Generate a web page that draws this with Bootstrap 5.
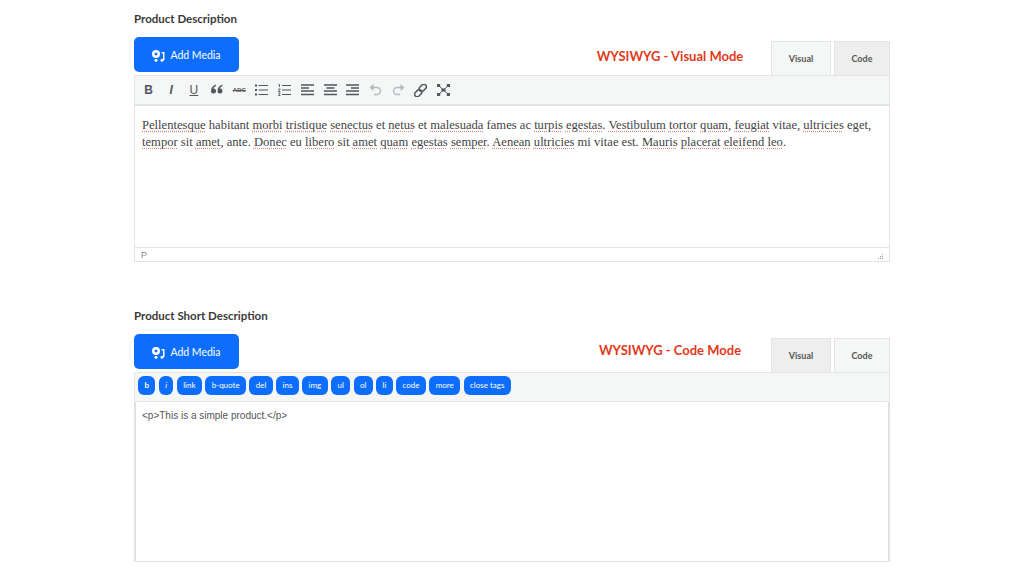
<!DOCTYPE html>
<html lang="en">
<head>
  <meta charset="UTF-8">
  <title>Product editor</title>
  <meta name="viewport" content="width=device-width, initial-scale=1">
  <link href="https://cdn.jsdelivr.net/npm/bootstrap@5.3.0/dist/css/bootstrap.min.css" rel="stylesheet">
  <style>
    body { font-family: "Lato", sans-serif; background: #fff; color: #333; overflow: hidden; }
    .page-wrap { width: 756px; margin-left: 134px; padding-top: 11px; }
    .field-label { font-size: 11.5px; font-weight: 700; line-height: 15px; color: #3a3a3a; margin-bottom: 11px; }
    .media-btn { width: 105px; height: 35px; font-size: 10.5px; border-radius: 5px; background: #0d6efd; border: 0; padding: 2px 0 0; gap: 5px; font-family: "Lato", sans-serif; }
    .mode-note { width: 202px; text-align: center; font-size: 13px; font-weight: 700; color: #e2391b; line-height: 17px; }
    .note-code { padding-bottom: 6px; }
    .head-row { height: 35px; }
    .mode-tab { width: 60px; height: 34px; border: 1px solid #e2e4e7; border-bottom: 0; font-size: 9px; font-weight: 700; color: #555; font-family: "Lato", sans-serif; margin-top: 4px; }
    .mode-tab + .mode-tab { margin-left: 3px; width: 56px; }
    .tab-on { background: #f5f6f6; }
    .tab-off { background: #eeeeee; }
    .edit-box { border: 1px solid #e2e4e7; margin-top: 3px; }
    .tool-row { height: 30px; background: #f5f6f6; border-bottom: 2px solid #e2e4e7; padding-left: 5px; }
    .tool-icon { width: 17px; height: 16px; color: #50575e; font-size: 12px; font-weight: 700; line-height: 16px; text-align: center; font-family: "Liberation Sans", sans-serif; }
    .tool-icon + .tool-icon { margin-left: 5.7px; }
    .tool-icon svg { display: block; margin: 2px auto 0; }
    .under-u { font-weight: 400; text-decoration: underline; }
    .tiny-abc { font-size: 6px; text-decoration: line-through; }
    .visual-body { height: 141px; padding: 11px 7px; font-family: "Liberation Serif", serif; font-size: 12.6px; line-height: 17px; color: #444; }
    .sp { text-decoration: underline dotted #e08a85; text-underline-offset: 2px; }
    .status-row { height: 14px; border-top: 1px solid #e2e4e7; font-size: 9px; line-height: 14px; color: #888; padding: 0 6px; font-family: "Liberation Sans", sans-serif; }
    .second-block { margin-top: 46px; }
    .quick-row { height: 28px; background: #f5f6f6; padding: 3px 0 0 3px; gap: 3.3px; }
    .quick-tag { height: 19px; font-size: 8px; line-height: 19px; color: #fff; background: #0d6efd; border-radius: 6px; padding: 0 6.45px; font-family: "Lato", sans-serif; }
    .code-box { height: 161px; border: 1px solid #dcdee0; border-top-color: #e2e4e7; border-radius: 2px; padding: 7px 6px; font-family: "Liberation Sans", sans-serif; font-size: 10px; line-height: 14px; color: #555; }
    .code-outer { border: 1px solid #e2e4e7; border-bottom: 0; margin-top: 3px; }
  </style>
</head>
<body>
  <div class="page-wrap">
    <div class="field-label">Product Description</div>
    <div class="d-flex align-items-start head-row">
      <button class="btn btn-primary media-btn d-flex align-items-center justify-content-center">
        <svg width="13" height="12" viewBox="0 0 13 12" fill="#fff"><path fill-rule="evenodd" d="M4 0a4 4 0 0 1 4 4 4 4 0 0 1-4 4 4 4 0 0 1-4-4 4 4 0 0 1 4-4zM2.700 2.700v2.600h2.600V2.700z"/><circle cx="4" cy="10.300" r="1.500"/><circle cx="10" cy="10.300" r="1.500"/><path d="M9.500 2H12.500V10H11V3.500H9.500z"/></svg>
        <span>Add Media</span>
      </button>
      <div class="ms-auto d-flex">
        <div class="mode-note align-self-center">WYSIWYG - Visual Mode</div>
        <div class="mode-tab tab-on d-flex align-items-center justify-content-center">Visual</div>
        <div class="mode-tab tab-off d-flex align-items-center justify-content-center">Code</div>
      </div>
    </div>
    <div class="edit-box">
      <div class="tool-row d-flex align-items-center">
        <div class="tool-icon">B</div>
        <div class="tool-icon fst-italic">I</div>
        <div class="tool-icon under-u">U</div>
        <div class="tool-icon"><svg width="12" height="11" viewBox="0 0 12 11" fill="#50575e"><path d="M5 0.500C2 1.500 0 3.500 0 7a2.500 2.500 0 1 0 2.500-2.500c0-.8.900-1.800 2.500-2.500zM11.500 0.500C8.500 1.500 6.500 3.500 6.500 7A2.500 2.500 0 1 0 9 4.500c0-.8.900-1.800 2.500-2.500z"/></svg></div>
        <div class="tool-icon tiny-abc">ABC</div>
        <div class="tool-icon"><svg width="13" height="12" viewBox="0 0 13 12" fill="none" stroke="#50575e"><path d="M3.500 1.500H13M3.500 6H13M3.500 10.500H13"/><path stroke-width="2" d="M0 1.500h2M0 6h2M0 10.500h2"/></svg></div>
        <div class="tool-icon"><svg width="13" height="12" viewBox="0 0 13 12" fill="none" stroke="#50575e"><path d="M4 1.500H13M4 6H13M4 10.500H13"/><path stroke-width="0.900" d="M0.500 0.700l1-.400V3M0.300 5h2l-2 2.500h2M0.300 9h2L1 10.300l1.300 1.200H0.300"/></svg></div>
        <div class="tool-icon"><svg width="13" height="12" viewBox="0 0 13 12" fill="none" stroke="#50575e" stroke-width="1.300"><path d="M0 1h13M0 4h8M0 7h13M0 10.500h13"/></svg></div>
        <div class="tool-icon"><svg width="13" height="12" viewBox="0 0 13 12" fill="none" stroke="#50575e" stroke-width="1.300"><path d="M0 1h13M2.500 4h8M0 7h13M0 10.500h13"/></svg></div>
        <div class="tool-icon"><svg width="13" height="12" viewBox="0 0 13 12" fill="none" stroke="#50575e" stroke-width="1.300"><path d="M0 1h13M5 4h8M0 7h13M0 10.500h13"/></svg></div>
        <div class="tool-icon"><svg width="13" height="12" viewBox="0 0 13 12" fill="none" stroke="#b4b9be" stroke-width="1.400"><path d="M2 3.500h6a3.500 3.500 0 0 1 0 7H5"/><path fill="#b4b9be" stroke="none" d="M4.500 0v7L0.500 3.500z"/></svg></div>
        <div class="tool-icon"><svg width="13" height="12" viewBox="0 0 13 12" fill="none" stroke="#b4b9be" stroke-width="1.400"><path d="M11 3.500H5a3.500 3.500 0 0 0 0 7h3"/><path fill="#b4b9be" stroke="none" d="M8.500 0v7l4-3.500z"/></svg></div>
        <div class="tool-icon"><svg width="13" height="13" viewBox="0 0 13 13" fill="none" stroke="#50575e" stroke-width="1.500"><rect x="6.300" y="-0.200" width="5" height="8" rx="2.500" transform="rotate(45 8.800 3.800)"/><rect x="1.700" y="5.200" width="5" height="8" rx="2.500" transform="rotate(45 4.200 9.200)"/></svg></div>
        <div class="tool-icon"><svg width="13" height="12" viewBox="0 0 13 12" fill="#50575e" stroke="none"><rect width="3.200" height="3"/><rect x="9.800" width="3.200" height="3"/><rect y="9" width="3.200" height="3"/><rect x="9.800" y="9" width="3.200" height="3"/><path stroke="#50575e" d="M2 2L11 10M11 2L2 10"/><path d="M4.500 4.500h4v3h-4z"/></svg></div>
      </div>
      <div class="visual-body"><span class="sp">Pellentesque</span> habitant <span class="sp">morbi</span> <span class="sp">tristique</span> <span class="sp">senectus</span> et <span class="sp">netus</span> et <span class="sp">malesuada</span> fames ac <span class="sp">turpis</span> <span class="sp">egestas</span>. <span class="sp">Vestibulum</span> <span class="sp">tortor</span> <span class="sp">quam</span>, <span class="sp">feugiat</span> vitae, <span class="sp">ultricies</span> eget, <span class="sp">tempor</span> sit <span class="sp">amet</span>, ante. <span class="sp">Donec</span> eu <span class="sp">libero</span> sit <span class="sp">amet</span> <span class="sp">quam</span> <span class="sp">egestas</span> <span class="sp">semper</span>. <span class="sp">Aenean</span> <span class="sp">ultricies</span> mi vitae est. <span class="sp">Mauris</span> <span class="sp">placerat</span> <span class="sp">eleifend</span> <span class="sp">leo</span>.</div>
      <div class="status-row d-flex justify-content-between">
        <span>P</span>
        <svg width="8" height="14" viewBox="0 0 8 14" fill="#999"><path d="M7 6h1v1H7zM5 8h1v1H5zM7 8h1v1H7zM3 10h1v1H3zM5 10h1v1H5zM7 10h1v1H7z"/></svg>
      </div>
    </div>
    <div class="second-block">
      <div class="field-label">Product Short Description</div>
      <div class="d-flex align-items-start head-row">
        <button class="btn btn-primary media-btn d-flex align-items-center justify-content-center">
          <svg width="13" height="12" viewBox="0 0 13 12" fill="#fff"><path fill-rule="evenodd" d="M4 0a4 4 0 0 1 4 4 4 4 0 0 1-4 4 4 4 0 0 1-4-4 4 4 0 0 1 4-4zM2.700 2.700v2.600h2.600V2.700z"/><circle cx="4" cy="10.300" r="1.500"/><circle cx="10" cy="10.300" r="1.500"/><path d="M9.500 2H12.500V10H11V3.500H9.500z"/></svg>
          <span>Add Media</span>
        </button>
        <div class="ms-auto d-flex">
          <div class="mode-note note-code align-self-center">WYSIWYG - Code Mode</div>
          <div class="mode-tab tab-off d-flex align-items-center justify-content-center">Visual</div>
          <div class="mode-tab tab-on d-flex align-items-center justify-content-center">Code</div>
        </div>
      </div>
      <div class="code-outer">
        <div class="quick-row d-flex align-items-start">
          <span class="quick-tag fw-bold">b</span><span class="quick-tag fst-italic">i</span><span class="quick-tag">link</span><span class="quick-tag">b-quote</span><span class="quick-tag">del</span><span class="quick-tag">ins</span><span class="quick-tag">img</span><span class="quick-tag">ul</span><span class="quick-tag">ol</span><span class="quick-tag">li</span><span class="quick-tag">code</span><span class="quick-tag">more</span><span class="quick-tag">close tags</span>
        </div>
        <div class="code-box">&lt;p&gt;This is a simple product.&lt;/p&gt;</div>
      </div>
    </div>
  </div>
</body>
</html>
